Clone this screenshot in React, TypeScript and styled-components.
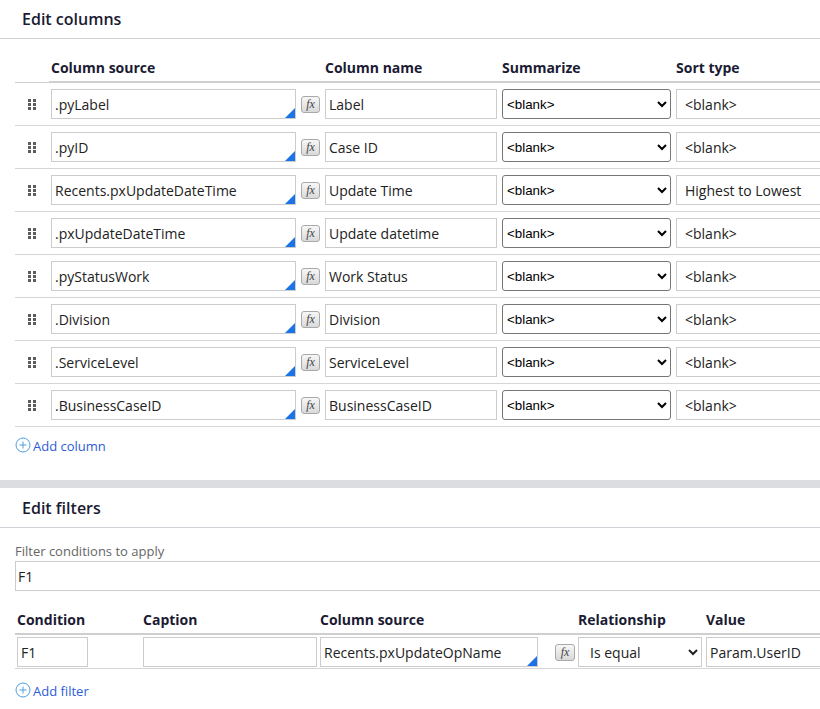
import React from 'react';
import styled, { createGlobalStyle } from 'styled-components';

const GlobalStyle = createGlobalStyle`
    html, body {
        margin: 0;
        padding: 0;
        background: #ffffff;
        overflow: hidden;
    }
    body {
        font-family: "Open Sans", "Noto Sans", sans-serif;
        color: #222222;
    }
`;

interface ColumnRow {
    source: string;
    name: string;
    sort: string;
}

const columns: ColumnRow[] = [
    { source: '.pyLabel', name: 'Label', sort: '<blank>' },
    { source: '.pyID', name: 'Case ID', sort: '<blank>' },
    { source: 'Recents.pxUpdateDateTime', name: 'Update Time', sort: 'Highest to Lowest' },
    { source: '.pxUpdateDateTime', name: 'Update datetime', sort: '<blank>' },
    { source: '.pyStatusWork', name: 'Work Status', sort: '<blank>' },
    { source: '.Division', name: 'Division', sort: '<blank>' },
    { source: '.ServiceLevel', name: 'ServiceLevel', sort: '<blank>' },
    { source: '.BusinessCaseID', name: 'BusinessCaseID', sort: '<blank>' },
];

const COLUMN_GRID = '34px 274px 177px 174px 1fr';
const FILTER_GRID = '126px 177px 258px 128px 1fr';

const DragHandle = () => (
    <svg width="8" height="11" viewBox="0 0 8 11">
        {[0, 4, 8].map(y => (
            <React.Fragment key={y}>
                <rect x="0" y={y} width="3" height="3" fill="#5c5c5c" />
                <rect x="5" y={y} width="3" height="3" fill="#5c5c5c" />
            </React.Fragment>
        ))}
    </svg>
);

const AddIcon = () => (
    <svg width="16" height="16" viewBox="0 0 16 16">
        <circle cx="8" cy="8" r="7" fill="none" stroke="#4a9fe3" strokeWidth="1" />
        <path d="M8 4.5v7M4.5 8h7" stroke="#4a9fe3" strokeWidth="1" />
    </svg>
);

const App: React.FC = () => {
    return (
        <>
            <GlobalStyle />
            <Page>
                <Section className="columns">
                    <SectionTitle>Edit columns</SectionTitle>
                    <Table>
                        <HeadRow cols={COLUMN_GRID}>
                            <HeadCell first />
                            <HeadCell>Column source</HeadCell>
                            <HeadCell>Column name</HeadCell>
                            <HeadCell>Summarize</HeadCell>
                            <HeadCell>Sort type</HeadCell>
                        </HeadRow>
                        {columns.map(col => (
                            <BodyRow key={col.source} cols={COLUMN_GRID} pad="6px 0">
                                <HandleCell><DragHandle /></HandleCell>
                                <Cell gap={5}>
                                    <SourceField width={245}>
                                        <TextInput defaultValue={col.source} readOnly />
                                        <Corner />
                                    </SourceField>
                                    <FxButton type="button">fx</FxButton>
                                </Cell>
                                <Cell>
                                    <TextInput width={172} defaultValue={col.name} readOnly />
                                </Cell>
                                <Cell>
                                    <NativeSelect defaultValue="blank">
                                        <option value="blank">&lt;blank&gt;</option>
                                        <option value="count">Count</option>
                                    </NativeSelect>
                                </Cell>
                                <Cell>
                                    <TextInput width={170} indent={8} defaultValue={col.sort} readOnly />
                                </Cell>
                            </BodyRow>
                        ))}
                    </Table>
                    <AddLink href="#" onClick={e => e.preventDefault()}>
                        <AddIcon />
                        <span>Add column</span>
                    </AddLink>
                </Section>
                <Band />
                <Section className="filters">
                    <SectionTitle tall>Edit filters</SectionTitle>
                    <FieldLabel>Filter conditions to apply</FieldLabel>
                    <ConditionsInput defaultValue="F1" readOnly />
                    <Table>
                        <HeadRow cols={FILTER_GRID}>
                            <HeadCell>Condition</HeadCell>
                            <HeadCell>Caption</HeadCell>
                            <HeadCell>Column source</HeadCell>
                            <HeadCell>Relationship</HeadCell>
                            <HeadCell>Value</HeadCell>
                        </HeadRow>
                        <BodyRow cols={FILTER_GRID} pad="2px 0 1px">
                            <Cell>
                                <TextInput width={71} defaultValue="F1" readOnly />
                            </Cell>
                            <Cell>
                                <TextInput width={174} defaultValue="" readOnly />
                            </Cell>
                            <Cell gap={17}>
                                <SourceField width={218}>
                                    <TextInput defaultValue="Recents.pxUpdateOpName" readOnly />
                                    <Corner />
                                </SourceField>
                                <FxButton type="button" wide>fx</FxButton>
                            </Cell>
                            <Cell>
                                <LightSelect defaultValue="eq">
                                    <option value="eq">Is equal</option>
                                    <option value="ne">Is not equal</option>
                                </LightSelect>
                            </Cell>
                            <Cell>
                                <TextInput width={170} defaultValue="Param.UserID" readOnly />
                            </Cell>
                        </BodyRow>
                    </Table>
                    <AddLink href="#" compact onClick={e => e.preventDefault()}>
                        <AddIcon />
                        <span>Add filter</span>
                    </AddLink>
                </Section>
            </Page>
        </>
    );
};

const Page = styled.div`
    width: 860px;
    display: flex;
    flex-direction: column;
`;

const Section = styled.section`
    display: flex;
    flex-direction: column;
    &.columns {
        padding-bottom: 25px;
    }
    &.filters {
        padding-bottom: 12px;
    }
`;

const SectionTitle = styled.h2<{ tall?: boolean }>`
    margin: 0;
    height: ${p => (p.tall ? 39 : 38)}px;
    padding-left: 22px;
    display: flex;
    align-items: center;
    font-size: 16px;
    font-weight: 600;
    color: #1b1b33;
    border-bottom: 1px solid #d0d1d6;
`;

const Band = styled.div`
    height: 8px;
    background: #dcdde1;
`;

const Table = styled.div`
    margin-left: 15px;
    display: flex;
    flex-direction: column;
`;

const HeadRow = styled.div<{ cols: string }>`
    display: grid;
    grid-template-columns: ${p => p.cols};
    height: 44px;
`;

const HeadCell = styled.div<{ first?: boolean }>`
    display: flex;
    align-items: flex-end;
    padding: 0 0 4px 2px;
    font-size: 14px;
    font-weight: 700;
    line-height: 19px;
    color: #1b1b33;
    white-space: nowrap;
    border-bottom: ${p => (p.first ? '1px' : '2px')} solid #cfcfcf;
`;

const BodyRow = styled.div<{ cols: string; pad: string }>`
    display: grid;
    grid-template-columns: ${p => p.cols};
    padding: ${p => p.pad};
    border-bottom: 1px solid #d6d6d6;
`;

const Cell = styled.div<{ gap?: number }>`
    display: flex;
    align-items: center;
    gap: ${p => p.gap ?? 0}px;
    padding-left: 2px;
    min-width: 0;
`;

const HandleCell = styled.div`
    display: flex;
    align-items: center;
    justify-content: center;
`;

const SourceField = styled.div<{ width: number }>`
    position: relative;
    width: ${p => p.width}px;
    flex: none;
    display: flex;
`;

const Corner = styled.span`
    position: absolute;
    right: 1px;
    bottom: 1px;
    width: 0;
    height: 0;
    border-style: solid;
    border-width: 0 0 10px 10px;
    border-color: transparent transparent #1a74e8 transparent;
`;

const TextInput = styled.input<{ width?: number; indent?: number }>`
    box-sizing: border-box;
    width: ${p => (p.width ? `${p.width}px` : '100%')};
    flex: none;
    height: 30px;
    margin: 0;
    padding: 0 ${p => p.indent ?? 3}px;
    border: 1px solid #cccccc;
    border-radius: 0;
    background: #ffffff;
    font-family: "Open Sans", "Noto Sans", sans-serif;
    font-size: 14px;
    color: #222222;
    outline: none;
`;

const FxButton = styled.button<{ wide?: boolean }>`
    box-sizing: border-box;
    flex: none;
    width: ${p => (p.wide ? 20 : 19)}px;
    height: 17px;
    margin: 0;
    padding: 0 0 1px;
    border: 1px solid #a9a9a9;
    border-radius: 3px;
    background: linear-gradient(#f7f7f7, #d9d9d9);
    font-family: "Liberation Serif", "DejaVu Serif", serif;
    font-style: italic;
    font-size: 12px;
    line-height: 14px;
    color: #444444;
`;

const NativeSelect = styled.select`
    box-sizing: border-box;
    width: 169px;
    height: 30px;
    margin: 0;
    padding: 0;
    border: 1px solid #767676;
    border-radius: 3px;
    background-color: #ffffff;
    font-family: "Liberation Sans", Arial, sans-serif;
    font-size: 13.33px;
    color: #000000;
`;

const LightSelect = styled.select`
    box-sizing: border-box;
    width: 124px;
    height: 30px;
    margin: 0;
    padding: 0 0 0 7px;
    border: 1px solid #cccccc;
    border-radius: 0;
    background-color: #ffffff;
    font-family: "Open Sans", "Noto Sans", sans-serif;
    font-size: 14px;
    color: #222222;
`;

const FieldLabel = styled.label`
    display: block;
    margin: 14px 0 1px 15px;
    font-size: 13px;
    line-height: 18px;
    color: #666666;
`;

const ConditionsInput = styled(TextInput)`
    margin-left: 15px;
    width: 830px;
    padding: 0 2px;
`;

const AddLink = styled.a<{ compact?: boolean }>`
    display: flex;
    align-items: center;
    gap: 2px;
    align-self: flex-start;
    margin: ${p => (p.compact ? '13px' : '10px')} 0 0 15px;
    font-size: 13px;
    line-height: 18px;
    color: #2d5bd8;
    text-decoration: none;
    svg {
        margin-top: -3px;
    }
`;

export default App;
